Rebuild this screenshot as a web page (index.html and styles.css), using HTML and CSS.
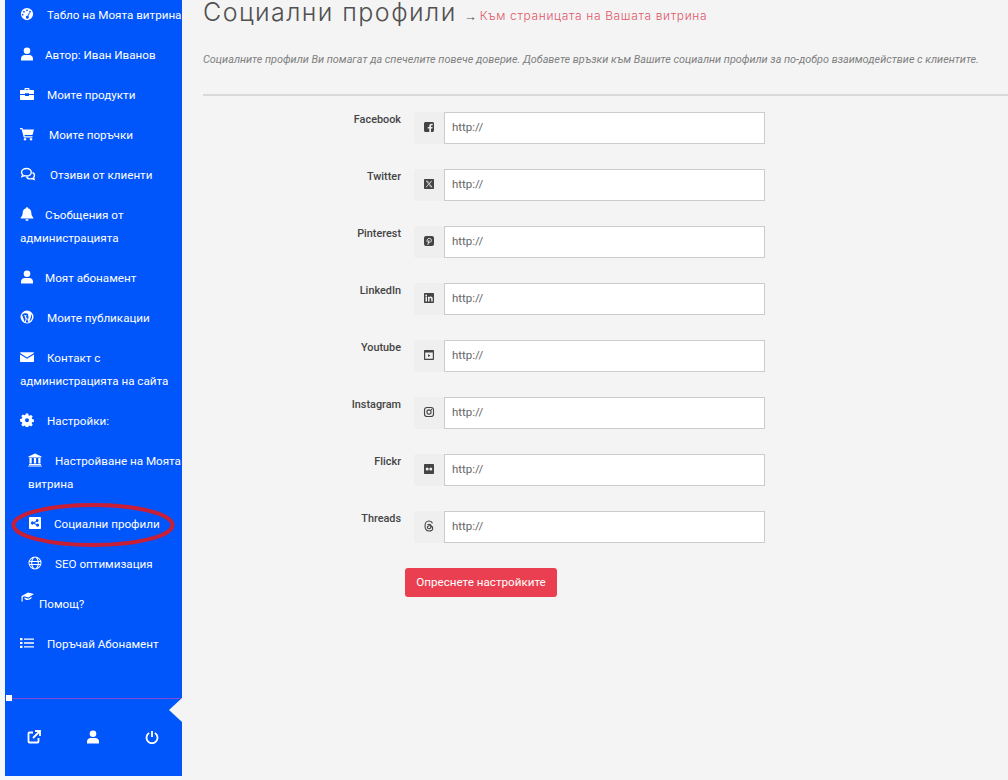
FILE: index.html
```html
<!DOCTYPE html>
<html lang="bg">
<head>
<meta charset="utf-8">
<title>Социални профили</title>
<link rel="stylesheet" href="styles.css">
</head>
<body>
<div class="page">
  <aside class="sidebar">
    <ul class="nav">
      <li class="item nowrap"><svg class="ic" viewBox="0 0 16 16"><path fill-rule="evenodd" d="M8 1a7 7 0 1 0 0 14A7 7 0 0 0 8 1zM8 2.800a1 1 0 1 1 0 2 1 1 0 0 1 0-2zM4.500 4.300a1 1 0 1 1 0 2 1 1 0 0 1 0-2zM11.500 4.300a1 1 0 1 1 0 2 1 1 0 0 1 0-2zM10.400 6.400l.9.4-1.800 3.500a1.700 1.700 0 1 1-.9-.4zM3 7.800a1 1 0 1 1 0 2 1 1 0 0 1 0-2z"/></svg><span class="gap-a">Табло на Моята витрина</span></li>
      <li class="item"><svg class="ic" viewBox="0 0 14 14"><circle cx="7" cy="3.800" r="3.300"/><path d="M1 13.500v-2c0-2.200 1.800-3.500 3.500-3.500h5c1.700 0 3.500 1.300 3.500 3.500v2z"/></svg><span class="gap-b">Автор: Иван Иванов</span></li>
      <li class="item"><svg class="ic" viewBox="0 0 14 14"><path fill-rule="evenodd" d="M4.500 3V1.800c0-.5.400-.8.800-.8h3.400c.4 0 .8.300.8.800V3H13c.6 0 1 .4 1 1v3H9v-.7H5V7H0V4c0-.6.400-1 1-1zM5.700 2.200V3h2.600v-.8zM0 8h5v1h4V8h5v4c0 .6-.4 1-1 1H1c-.6 0-1-.4-1-1z"/></svg><span class="gap-a">Моите продукти</span></li>
      <li class="item"><svg class="ic" viewBox="0 0 14 14"><path d="M0 1h2.500l.4 1.500H14l-1.500 5.500H4.500l.3 1.200h7.700v1.200H3.800L1.600 2.200H0z"/><circle cx="5" cy="12.300" r="1.200"/><circle cx="11" cy="12.300" r="1.200"/></svg><span class="gap-c">Моите поръчки</span></li>
      <li class="item"><svg class="ic wide" viewBox="0 0 16 14"><path class="ln" d="M6.500 1.500c-2.700 0-5 1.600-5 3.700 0 1 .5 1.800 1.200 2.500L2 9.500l2.400-.8c.7.200 1.400.3 2.100.3 2.700 0 4.800-1.600 4.800-3.800s-2.100-3.700-4.800-3.700z"/><path class="ln" d="M12.500 5.500c1.300.6 2 1.600 2 2.800 0 .9-.4 1.600-1 2.200l.6 1.900-2.300-.8c-1.800.5-4.300-.1-5.300-1.600"/></svg><span class="gap-d">Отзиви от клиенти</span></li>
      <li class="item"><svg class="ic" viewBox="0 0 14 14"><path d="M7 0c.5 0 .9.400.9.900v.4c2 .4 3.400 2.100 3.400 4.200 0 3.400 1.500 4.400 2 5v.9H.7v-.9c.5-.6 2-1.600 2-5 0-2.100 1.400-3.800 3.400-4.200V.9C6.100.4 6.500 0 7 0zM5.400 12.300h3.200a1.600 1.600 0 0 1-3.200 0z"/></svg><span class="gap-b">Съобщения от администрацията</span></li>
      <li class="item"><svg class="ic" viewBox="0 0 14 14"><circle cx="7" cy="3.800" r="3.300"/><path d="M1 13.500v-2c0-2.200 1.800-3.500 3.500-3.500h5c1.700 0 3.500 1.300 3.500 3.500v2z"/></svg><span class="gap-b">Моят абонамент</span></li>
      <li class="item"><svg class="ic" viewBox="0 0 14 14"><path fill-rule="evenodd" d="M7 .5a6.500 6.500 0 1 0 0 13 6.500 6.500 0 0 0 0-13zM2 4.700l2.700 7.300.9-2.800-1.100-3.300-.8-.1v-.6h3v.6l-.8.100 1.700 4.900.9-3c.3-1.200-.4-2-.6-2.500-.3-.6.100-1 .6-1.100A5.400 5.400 0 0 0 2 4.700zM7.100 7.700l-1.400 4.600c.9.300 1.900.2 2.800-.1zM10.900 3.800c.5 1.900.1 3-.2 3.900l-1.400 4a5.300 5.300 0 0 0 1.600-7.900z"/></svg><span class="gap-a">Моите публикации</span></li>
      <li class="item"><svg class="ic" viewBox="0 0 14 14"><path d="M1 2.200h12c.6 0 1 .4 1 .9L7 7.400 0 3.100c0-.5.400-.9 1-.9zM0 4.400l7 4.300 7-4.300V11c0 .6-.4 1-1 1H1c-.6 0-1-.4-1-1z"/></svg><span class="gap-a">Контакт с администрацията на сайта</span></li>
      <li class="item"><svg class="ic" viewBox="0 0 14 14"><path fill-rule="evenodd" d="M5.800.5h2.400l.3 1.800 1 .5 1.600-.9 1.600 1.700-1 1.500.4 1 1.800.4v2.400l-1.800.4-.4 1 1 1.500-1.600 1.700-1.600-.9-1 .5-.3 1.800H5.800l-.3-1.800-1-.5-1.600.9-1.600-1.700 1-1.500-.4-1L.1 8.400V6l1.800-.4.4-1-1-1.500 1.600-1.700 1.600.9 1-.5zM7 5.200a2 2 0 1 0 0 4 2 2 0 0 0 0-4z"/></svg><span class="gap-a">Настройки:</span></li>
      <li class="item sub"><svg class="ic" viewBox="0 0 14 14"><path d="M7 .5l6.500 3v1H.5v-1zM1.500 5h2.200v5.500H1.500zM5.900 5h2.200v5.500H5.900zM10.300 5h2.200v5.500h-2.200zM1 11h12v1H1zM.3 12.500h13.400v1H.3z"/></svg><span class="gap-e">Настройване на Моята витрина</span></li>
      <li class="item sub"><svg class="ic" viewBox="0 0 14 14"><path fill-rule="evenodd" d="M2 1h10c.6 0 1 .4 1 1v10c0 .6-.4 1-1 1H2c-.6 0-1-.4-1-1V2c0-.6.400-1 1-1zM9.500 3a1.500 1.500 0 0 0-1.400 2L5.700 6.200a1.500 1.500 0 1 0 0 1.600L8.100 9a1.500 1.500 0 1 0 .5-.9L6.200 7l2.400-1.100A1.500 1.500 0 1 0 9.500 3z"/></svg><span class="gap-f">Социални профили</span></li>
      <li class="item sub"><svg class="ic" viewBox="0 0 14 14"><path fill-rule="evenodd" d="M7 .5a6.500 6.500 0 1 0 0 13 6.500 6.500 0 0 0 0-13zM4.800 2c-.7.700-1.200 1.700-1.500 3H1.900a5.500 5.500 0 0 1 2.900-3zM7 1.500c1 0 2.100 1.400 2.500 3.500h-5C4.900 2.900 6 1.500 7 1.500zM9.200 2a5.500 5.500 0 0 1 2.900 3h-1.400c-.3-1.300-.8-2.300-1.500-3zM1.600 6h1.600a11 11 0 0 0 0 2H1.600a5.500 5.500 0 0 1 0-2zM4.300 6h5.400a10 10 0 0 1 0 2H4.300a10 10 0 0 1 0-2zM10.800 6h1.600a5.500 5.500 0 0 1 0 2h-1.600a11 11 0 0 0 0-2zM1.900 9h1.400c.3 1.300.8 2.300 1.500 3a5.500 5.500 0 0 1-2.900-3zM4.500 9h5c-.4 2.100-1.500 3.500-2.500 3.500S4.900 11.100 4.500 9zM10.700 9h1.400a5.500 5.500 0 0 1-2.900 3c.7-.7 1.200-1.700 1.500-3z"/></svg><span class="gap-e">SEO оптимизация</span></li>
      <li class="item"><svg class="ic cap" viewBox="0 0 14 14"><path d="M2.500 4.500L8 1.500l6 1.500-5.500 3.500-4.500-1.200-1.300.9v4.300H1.500V5.200zM4.500 6.500l4 1.200 3-1.900v1.500c-1.500 1.500-3.500 2-5.500 1.500l-1.500-.7z"/></svg><span class="gap-g">Помощ?</span></li>
      <li class="item"><svg class="ic" viewBox="0 0 14 14"><path d="M0 2h2.500v2.200H0zM4 2.400h10v1.400H4zM0 5.900h2.500v2.200H0zM4 6.300h10v1.400H4zM0 9.800h2.500V12H0zM4 10.200h10v1.400H4z"/></svg><span class="gap-a">Поръчай Абонамент</span></li>
    </ul>
    <div class="foot">
      <div class="rule"><span class="knob"></span><span class="notch"></span></div>
      <div class="tools">
        <svg class="tool" viewBox="0 0 14 14"><path class="ln2" d="M6 2.500H2.500c-.6 0-1 .4-1 1v8c0 .6.400 1 1 1h8c.6 0 1-.4 1-1V8"/><path class="ln2" d="M8 1h5v5M13 1L6 8"/></svg>
        <svg class="tool" viewBox="0 0 14 14"><circle cx="7" cy="3.800" r="3.300"/><path d="M1 13.500v-2c0-2.200 1.800-3.500 3.500-3.500h5c1.700 0 3.500 1.300 3.500 3.500v2z"/></svg>
        <svg class="tool" viewBox="0 0 14 14"><path class="ln2" d="M4.200 3A5.500 5.500 0 1 0 9.800 3M7 1v6"/></svg>
      </div>
    </div>
  </aside>
  <main class="main">
    <header class="head">
      <h1 class="title">Социални профили</h1>
      <span class="arrow">→</span>
      <a class="back">Към страницата на Вашата витрина</a>
    </header>
    <p class="intro">Социалните профили Ви помагат да спечелите повече доверие. Добавете връзки към Вашите социални профили за по-добро взаимодействие с клиентите.</p>
    <hr class="sep">
    <form class="form">
      <div class="row"><label class="lbl">Facebook</label><span class="addon"><svg class="soc" viewBox="0 0 12 12"><path d="M2.500 1h7C10.300 1 11 1.700 11 2.500v7c0 .8-.7 1.500-1.500 1.500H8V7.500h1.300L9.600 6H8V5.100c0-.5.200-.8.800-.8h.9V2.900C9.400 2.800 9 2.700 8.500 2.700 7.200 2.700 6.300 3.500 6.300 4.900V6H4.800v1.500h1.500V11H2.500C1.700 11 1 10.300 1 9.500v-7C1 1.700 1.700 1 2.500 1z"/></svg></span><input class="inp" type="text" value="http://"></div>
      <div class="row"><label class="lbl">Twitter</label><span class="addon"><svg class="soc" viewBox="0 0 12 12"><path fill-rule="evenodd" d="M2 1h8c.6 0 1 .4 1 1v8c0 .6-.4 1-1 1H2c-.6 0-1-.4-1-1V2c0-.6.400-1 1-1zM2.800 2.800l2.500 3.400-2.600 3h.8l2.200-2.500 1.800 2.500h2L6.700 5.700 9.100 2.800h-.8L6.300 5.100 4.700 2.800zM3.900 3.300h.6l3.600 5.400h-.6z"/></svg></span><input class="inp" type="text" value="http://"></div>
      <div class="row"><label class="lbl">Pinterest</label><span class="addon"><svg class="soc" viewBox="0 0 12 12"><rect class="sq" x="1" y="1" width="10" height="10" rx="2"/><path class="cut" d="M4.800 9.800L6 5.200M4.200 6.900C3.500 5.200 4.600 3.400 6.300 3.400c1.400 0 2.200 1 2.100 2.100-.1 1.300-1.300 2.300-2.600 1.700"/></svg></span><input class="inp" type="text" value="http://"></div>
      <div class="row"><label class="lbl">LinkedIn</label><span class="addon"><svg class="soc" viewBox="0 0 12 12"><path fill-rule="evenodd" d="M2 1h8c.6 0 1 .4 1 1v8c0 .6-.4 1-1 1H2c-.6 0-1-.4-1-1V2c0-.6.400-1 1-1zM2.500 4.800V9.500H4V4.800zM3.200 2.500a.9.900 0 1 0 0 1.800.9.900 0 0 0 0-1.800zM5 4.800V9.500h1.500V7c0-.7.300-1 .9-1 .5 0 .8.300.8 1v2.500h1.500V6.600c0-1.300-.8-2-1.800-2-.7 0-1.200.3-1.400.7v-.5z"/></svg></span><input class="inp" type="text" value="http://"></div>
      <div class="row"><label class="lbl">Youtube</label><span class="addon"><svg class="soc" viewBox="0 0 12 12"><path fill-rule="evenodd" d="M2 1h8c.6 0 1 .4 1 1v8c0 .6-.4 1-1 1H2c-.6 0-1-.4-1-1V2c0-.6.400-1 1-1zM2.200 3.500v6.300h7.600V3.500zM5 5.200l2.500 1.400L5 8z"/></svg></span><input class="inp" type="text" value="http://"></div>
      <div class="row"><label class="lbl">Instagram</label><span class="addon"><svg class="soc" viewBox="0 0 12 12"><rect class="ln3" x="1.500" y="1.500" width="9" height="9" rx="2.600"/><circle class="ln3" cx="6" cy="6" r="2.100"/><circle class="dot" cx="8.600" cy="3.400" r=".6"/></svg></span><input class="inp" type="text" value="http://"></div>
      <div class="row"><label class="lbl">Flickr</label><span class="addon"><svg class="soc" viewBox="0 0 12 12"><path fill-rule="evenodd" d="M2 1h8c.6 0 1 .4 1 1v8c0 .6-.4 1-1 1H2c-.6 0-1-.4-1-1V2c0-.6.400-1 1-1zM4.200 4.500a1.500 1.500 0 1 0 0 3 1.500 1.500 0 0 0 0-3zM7.800 4.500a1.500 1.500 0 1 0 0 3 1.500 1.500 0 0 0 0-3z"/></svg></span><input class="inp" type="text" value="http://"></div>
      <div class="row"><label class="lbl">Threads</label><span class="addon"><svg class="soc" viewBox="0 0 12 12"><path class="ln3" d="M9.500 3.200C8.900 1.800 7.600 1 6 1 3.500 1 2 2.800 2 6s1.500 5 4 5c2.200 0 3.700-1.200 3.700-2.800 0-1.500-1.200-2.500-3-2.500-1.400 0-2.300.6-2.300 1.600 0 .9.700 1.400 1.600 1.400 1.400 0 2.100-.9 2.100-2.400 0-1.300-.7-2.100-1.900-2.100-.8 0-1.300.3-1.700.8"/></svg></span><input class="inp" type="text" value="http://"></div>
      <div class="actions"><button class="btn" type="button">Опреснете настройките</button></div>
    </form>
  </main>
</div>
<svg class="mark" viewBox="0 0 170 50"><ellipse class="mark-line" cx="85" cy="25" rx="79.500" ry="20"/></svg>
</body>
</html>
```
FILE: styles.css
```css
html, body { margin: 0; height: 100%; overflow: hidden; background: #fff; }
body { position: relative; font-family: Roboto, "Liberation Sans", sans-serif; }
.page { display: flex; height: 780px; padding-left: 5px; box-sizing: border-box; background: #f5f8fa; }
.sidebar { width: 177px; height: 776px; flex: none; background: #0055fb; color: #fff; display: flex; flex-direction: column; }
.nav { list-style: none; margin: -5px 0 0; padding: 0; flex: 1; }
.item { padding: 8.5px 0 8.5px 15px; font-size: 11.65px; line-height: 23px; }
.item.nowrap { white-space: nowrap; }
.item.sub { padding-left: 23px; margin-right: -3px; }
.ic { width: 14px; height: 14px; fill: #fff; vertical-align: -2px; }
.ic.wide { width: 16px; }
.ic.cap { vertical-align: 3px; margin-top: -5px; }
.ln { fill: none; stroke: #fff; stroke-width: 1.4; }
.ln2 { fill: none; stroke: #fff; stroke-width: 1.8; }
.gap-a { margin-left: 13px; }
.gap-b { margin-left: 11px; }
.gap-c { margin-left: 15px; }
.gap-d { margin-left: 14px; }
.gap-e { margin-left: 13px; }
.gap-f { margin-left: 12px; }
.gap-g { margin-left: 5px; }
.foot { height: 78px; flex: none; }
.rule { position: relative; height: 1px; background: #7c4bd6; }
.knob { position: absolute; left: 1px; top: -3px; width: 6px; height: 6px; background: #fff; }
.notch { position: absolute; right: 0; top: 0; border-style: solid; border-width: 12px 13px 12px 0; border-color: transparent #f4f4f4 transparent transparent; }
.tools { display: flex; justify-content: space-between; padding: 31px 23px 0 22px; }
.tool { width: 14px; height: 14px; fill: #fff; }
.main { flex: 1; background: #f4f4f4; padding-left: 21px; min-width: 0; }
.head { display: flex; align-items: baseline; height: 30px; margin-top: -3px; }
.title { margin: 0; font-family: Inter, sans-serif; font-weight: 300; font-size: 25px; line-height: 30px; color: #505050; letter-spacing: 1.45px; white-space: nowrap; }
.arrow { margin-left: 7px; font-size: 13px; color: #555; }
.back { margin-left: 3px; position: relative; top: -1px; font-family: Inter, sans-serif; font-weight: 300; font-size: 12px; letter-spacing: .65px; color: #e0566a; white-space: nowrap; }
.intro { margin: 26px 0 0; font-size: 10.85px; line-height: 14px; font-style: italic; color: #808080; white-space: nowrap; }
.sep { margin: 27px 0 0; border: 0; height: 2px; background: #d9d9d9; }
.form { padding-top: 16px; }
.row { display: flex; height: 32px; margin-bottom: 25px; }
.lbl { width: 198px; flex: none; padding-top: 1px; text-align: right; font-size: 10.85px; font-weight: 500; line-height: 14px; color: #444; }
.addon { width: 30px; margin-left: 13px; flex: none; display: flex; align-items: center; justify-content: center; box-sizing: border-box; padding-bottom: 3px; background: #efefef; border-radius: 3px 0 0 3px; }
.soc { width: 12px; height: 12px; fill: #444; }
.sq { fill: #444; }
.cut { fill: none; stroke: #efefef; stroke-width: 1; }
.ln3 { fill: none; stroke: #444; stroke-width: 1.1; }
.dot { fill: #444; }
.inp { width: 321px; box-sizing: border-box; height: 32px; border: 1px solid #ccc; background: #fff; padding: 0 7px 3px; font: 11.5px Roboto, sans-serif; color: #666; }
.actions { padding: 0 0 0 202px; }
.btn { width: 152px; height: 29px; border: 0; border-radius: 3px; background: #ea3f50; color: #fff; font: 11.65px/29px Roboto, sans-serif; padding: 0; }
.mark { position: absolute; left: 8px; top: 500px; width: 170px; height: 50px; }
.mark-line { fill: none; stroke: #c71f37; stroke-width: 4; }
```
